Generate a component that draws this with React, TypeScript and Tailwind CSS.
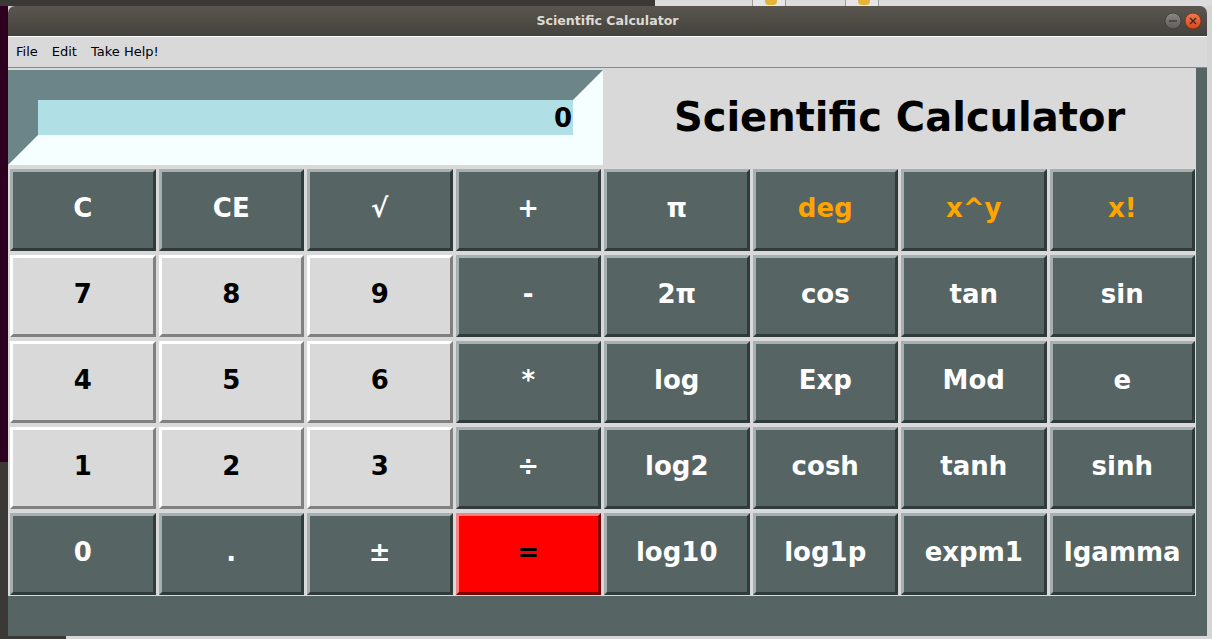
import React from "react";

type Kind = "dark" | "light" | "red";

const keys: [string, Kind, boolean?][] = [
  ["C", "dark"], ["CE", "dark"], ["√", "dark"], ["+", "dark"], ["π", "dark"], ["deg", "dark", true], ["x^y", "dark", true], ["x!", "dark", true],
  ["7", "light"], ["8", "light"], ["9", "light"], ["-", "dark"], ["2π", "dark"], ["cos", "dark"], ["tan", "dark"], ["sin", "dark"],
  ["4", "light"], ["5", "light"], ["6", "light"], ["*", "dark"], ["log", "dark"], ["Exp", "dark"], ["Mod", "dark"], ["e", "dark"],
  ["1", "light"], ["2", "light"], ["3", "light"], ["÷", "dark"], ["log2", "dark"], ["cosh", "dark"], ["tanh", "dark"], ["sinh", "dark"],
  ["0", "dark"], [".", "dark"], ["±", "dark"], ["=", "red"], ["log10", "dark"], ["log1p", "dark"], ["expm1", "dark"], ["lgamma", "dark"],
];

const kindClass: Record<Kind, string> = {
  dark: "bg-[#566464] border-t-[#a7b0b0] border-l-[#a7b0b0] border-b-[#2f3a3a] border-r-[#2f3a3a]",
  light: "bg-[#d9d9d9] border-t-white border-l-white border-b-[#808080] border-r-[#808080]",
  red: "bg-[#ff0000] border-t-[#ff8080] border-l-[#ff8080] border-b-[#800000] border-r-[#800000]",
};

function Key({ label, kind, orange }: { label: string; kind: Kind; orange?: boolean }) {
  const color = orange ? "text-[#ffa500]" : kind === "dark" ? "text-white" : "text-black";
  return (
    <button
      className={`h-[82px] border-[3px] flex items-center justify-center pb-[3px] text-[26px] font-bold ${kindClass[kind]} ${color}`}
    >
      {label}
    </button>
  );
}

export default function App() {
  return (
    <div className="w-[1212px] h-[639px] overflow-hidden bg-[#d6d6d6] flex flex-col font-['DejaVu_Sans',sans-serif]">
      {/* desktop strip above the window */}
      <div className="h-[6px] flex shrink-0">
        <div className="w-[655px] bg-[#3a3935]" />
        <div className="flex-1 bg-[#dcdcdc] relative">
          <div className="absolute left-[97px] top-0 w-[34px] h-[6px] border-x border-[#9a9a9a] bg-[#e6e6e6]">
            <div className="ml-[12px] w-[12px] h-[5px] bg-[#e6b43a] rounded-b-sm" />
          </div>
          <div className="absolute left-[190px] top-0 w-[34px] h-[6px] border-x border-[#9a9a9a] bg-[#e6e6e6]">
            <div className="ml-[12px] w-[12px] h-[5px] bg-[#e6b43a] rounded-b-sm" />
          </div>
        </div>
      </div>

      <div className="flex flex-1">
        {/* desktop at the left */}
        <div className="w-[8px] flex flex-col">
          <div className="h-[456px] bg-[#2c001e]" />
          <div className="flex-1 bg-[#3a3935]" />
        </div>

        {/* window */}
        <div className="w-[1199px] flex flex-col">
          <div className="h-[30px] rounded-t-[7px] bg-gradient-to-b from-[#5a564f] to-[#44423d] relative flex items-center justify-center">
            <span className="text-[12.6px] font-bold text-[#dfdbd2]">Scientific Calculator</span>
            <div className="absolute right-[5px] top-[6px] flex gap-[2px]">
              <svg width="18" height="18" viewBox="0 0 18 18">
                <defs>
                  <linearGradient id="mg" x1="0" y1="0" x2="0" y2="1">
                    <stop offset="0" stopColor="#8b8984" />
                    <stop offset="1" stopColor="#5d5b57" />
                  </linearGradient>
                </defs>
                <circle cx="9" cy="9" r="8" fill="url(#mg)" stroke="#3b3a37" strokeWidth="0.8" />
                <line x1="5" y1="9" x2="13" y2="9" stroke="#3a3a3a" strokeWidth="1.4" />
              </svg>
              <svg width="18" height="18" viewBox="0 0 18 18">
                <defs>
                  <linearGradient id="cg" x1="0" y1="0" x2="0" y2="1">
                    <stop offset="0" stopColor="#f27a4e" />
                    <stop offset="1" stopColor="#d9461b" />
                  </linearGradient>
                </defs>
                <circle cx="9" cy="9" r="8" fill="url(#cg)" stroke="#7a2b12" strokeWidth="0.8" />
                <path d="M6 6 L12 12 M12 6 L6 12" stroke="#3b2a24" strokeWidth="1.4" />
              </svg>
            </div>
          </div>

          {/* menu bar */}
          <div className="h-[32px] bg-[#d9d9d9] border-t border-t-white border-b border-b-[#8a8a8a] flex items-center pl-[1px] text-[13px] text-black">
            <span className="px-[7px]">File</span>
            <span className="px-[7px]">Edit</span>
            <span className="px-[7px]">Take Help!</span>
          </div>

          {/* content */}
          <div className="h-[568px] bg-[#566464] flex">
            <div className="w-[1188px] flex flex-col">
              <div className="bg-[#d9d9d9] pt-[2px] flex">
                <div className="w-[595px] h-[95px] border-[30px] border-t-[#6b8589] border-l-[#6b8589] border-b-[#f5ffff] border-r-[#f5ffff] bg-[#b0dfe5] flex items-center justify-end pr-[1px]">
                  <span className="text-[26px] font-bold text-black leading-none">0</span>
                </div>
                <div className="flex-1 flex items-center justify-center pb-[2px]">
                  <span className="text-[40px] font-bold text-black leading-none">Scientific Calculator</span>
                </div>
              </div>
              <div className="bg-[#d9d9d9] pt-[4px] pb-[1px] pl-[2px] pr-[1px] grid grid-cols-8 gap-x-[3px] gap-y-[4px]">
                {keys.map(([label, kind, orange]) => (
                  <Key key={label} label={label} kind={kind} orange={orange} />
                ))}
              </div>
            </div>
          </div>
        </div>

        <div className="flex-1 bg-[#d4d4d4]" />
      </div>

      <div className="h-[3px] flex shrink-0">
        <div className="w-[66px] bg-[#3a3935]" />
        <div className="flex-1 bg-[#d6d6d6]" />
      </div>
    </div>
  );
}
